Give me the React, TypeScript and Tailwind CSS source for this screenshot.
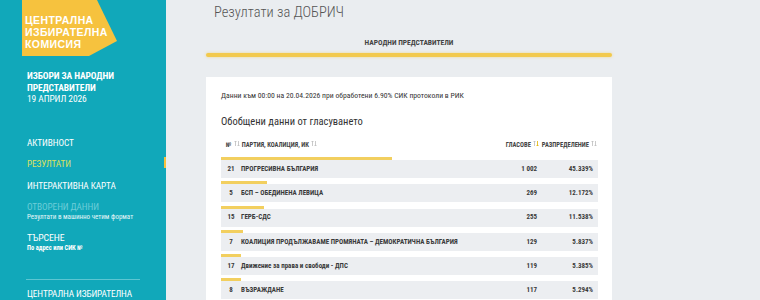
import React from 'react';

const cond = "font-['Roboto_Condensed','Liberation_Sans_Narrow','DejaVu_Sans_Condensed',Roboto,sans-serif]";

const rows = [
  { n: 21, name: 'ПРОГРЕСИВНА БЪЛГАРИЯ', votes: '1 002', pct: 45.339 },
  { n: 5, name: 'БСП – ОБЕДИНЕНА ЛЕВИЦА', votes: '269', pct: 12.172 },
  { n: 15, name: 'ГЕРБ-СДС', votes: '255', pct: 11.538 },
  { n: 7, name: 'КОАЛИЦИЯ ПРОДЪЛЖАВАМЕ ПРОМЯНАТА – ДЕМОКРАТИЧНА БЪЛГАРИЯ', votes: '129', pct: 5.837 },
  { n: 17, name: 'Движение за права и свободи - ДПС', votes: '119', pct: 5.385 },
  { n: 8, name: 'ВЪЗРАЖДАНЕ', votes: '117', pct: 5.294 },
];

function SortIcon({ active }: { active?: boolean }) {
  return (
    <svg width="6" height="7" viewBox="0 0 6 7" className="inline-block ml-[2px] align-[0px]">
      <path d="M1.5 6V1M0.5 2L1.5 1L2.5 2" stroke="#bdbdbd" strokeWidth="0.8" fill="none" />
      <path d="M4.5 1V6M3.5 5L4.5 6L5.5 5" stroke={active ? '#e0b400' : '#bdbdbd'} strokeWidth="0.8" fill="none" />
    </svg>
  );
}

function Sidebar() {
  return (
    <aside className={`w-[166px] shrink-0 h-[300px] overflow-hidden bg-[#11a8ba] text-white ${cond}`}>
      {/* logo */}
      <div className="relative h-[56px]">
        <svg width="120" height="56" viewBox="0 0 120 56" className="absolute left-0 top-0">
          <polygon points="22,0 97,0 117,41 89,56 22,56" fill="#f6c23e" />
        </svg>
        <div className="relative pl-[25px] pt-[14px] font-['Liberation_Sans',Arial,sans-serif] font-bold text-[10.5px] leading-[12px] tracking-[0.4px]">
          <div>ЦЕНТРАЛНА</div>
          <div>ИЗБИРАТЕЛНА</div>
          <div>КОМИСИЯ</div>
        </div>
      </div>

      <div className="pl-[27px] pt-[14px] text-[9.5px] leading-[11.5px] tracking-[-0.1px]">
        <div className="font-bold">ИЗБОРИ ЗА НАРОДНИ</div>
        <div className="font-bold">ПРЕДСТАВИТЕЛИ</div>
        <div>19 АПРИЛ 2026</div>
      </div>

      <nav className="pt-[32px] text-[9.3px] leading-[12px] tracking-[-0.1px]">
        <div className="pl-[27px] h-[21.5px]">АКТИВНОСТ</div>
        <div className="flex justify-between items-start h-[21.5px]">
          <span className="pl-[27px] text-[#dbe060]">РЕЗУЛТАТИ</span>
          <span className="w-[2px] h-[11px] bg-[#f6c23e] mt-[-1px]" />
        </div>
        <div className="pl-[27px] h-[21.5px]">ИНТЕРАКТИВНА КАРТА</div>
        <div className="pl-[27px] h-[31px]">
          <div className="text-[#6ccdd8]">ОТВОРЕНИ ДАННИ</div>
          <div className="text-[7px] leading-[8px] tracking-normal text-white/90">Резултати в машинно четим формат</div>
        </div>
        <div className="pl-[27px]">
          <div className="text-[9.8px] leading-[12px]">ТЪРСЕНЕ</div>
          <div className="text-[6.5px] leading-[8px] tracking-normal font-bold">По адрес или СИК №</div>
        </div>
        <div className="mx-[26px] mt-[27px] border-t border-[#5cc6d2]" />
        <div className="pl-[27px] pt-[7px] text-[9.3px] leading-[13px]">ЦЕНТРАЛНА ИЗБИРАТЕЛНА</div>
      </nav>
    </aside>
  );
}

export default function App() {
  return (
    <div className="flex w-[760px] h-[300px] overflow-hidden bg-[#eaedf0]">
      <Sidebar />
      <main className={`flex-1 pl-[40px] ${cond}`}>
        <div className="w-[406px]">
          <h1 className="pl-[8px] pt-[3px] text-[14.5px] leading-[20px] font-light text-[#555]">Резултати за ДОБРИЧ</h1>
          <div className="pt-[15px] text-center text-[7.5px] leading-[10px] font-bold text-[#444]">НАРОДНИ ПРЕДСТАВИТЕЛИ</div>
          <div className="mt-[5px] h-[4px] rounded-full bg-[#f2c94c] shadow-[0_0_3px_rgba(242,201,76,0.6)]" />
          <div className="mt-[20px] bg-white pl-[15px] pr-[14px] h-[300px]">
            <div className="pt-[13px] text-[7.7px] leading-[11px] text-[#333]">
              Данни към 00:00 на 20.04.2026 при обработени 6.90% СИК протоколи в РИК
            </div>
            <div className="pt-[13px] text-[10.5px] leading-[16px] text-[#333]">Обобщени данни от гласуването</div>
            <div className="flex items-center pt-[10px] pl-[5px] pr-[1px] text-[6.5px] leading-[9px] font-bold text-[#444]">
              <span>№<SortIcon /></span>
              <span className="ml-[2px]">ПАРТИЯ, КОАЛИЦИЯ, ИК<SortIcon /></span>
              <span className="ml-auto">ГЛАСОВЕ<SortIcon active /></span>
              <span className="ml-[3px]">РАЗПРЕДЕЛЕНИЕ<SortIcon /></span>
            </div>
            <div className="pt-[7px]">
              {rows.map((r) => (
                <div key={r.n} className="mb-[3.3px]">
                  <div className="h-[3px] bg-[#f2cf5f]" style={{ width: `${r.pct}%` }} />
                  <div className="flex items-center h-[18px] bg-[#eceef1] text-[7px] font-bold text-[#3a3a3a] whitespace-nowrap">
                    <span className="w-[20px] text-center">{r.n}</span>
                    <span className="flex-1">{r.name}</span>
                    <span className="w-[40px] text-right">{r.votes}</span>
                    <span className="w-[61px] text-right pr-[5px]">{r.pct.toFixed(3)}%</span>
                  </div>
                </div>
              ))}
            </div>
          </div>
        </div>
      </main>
    </div>
  );
}
